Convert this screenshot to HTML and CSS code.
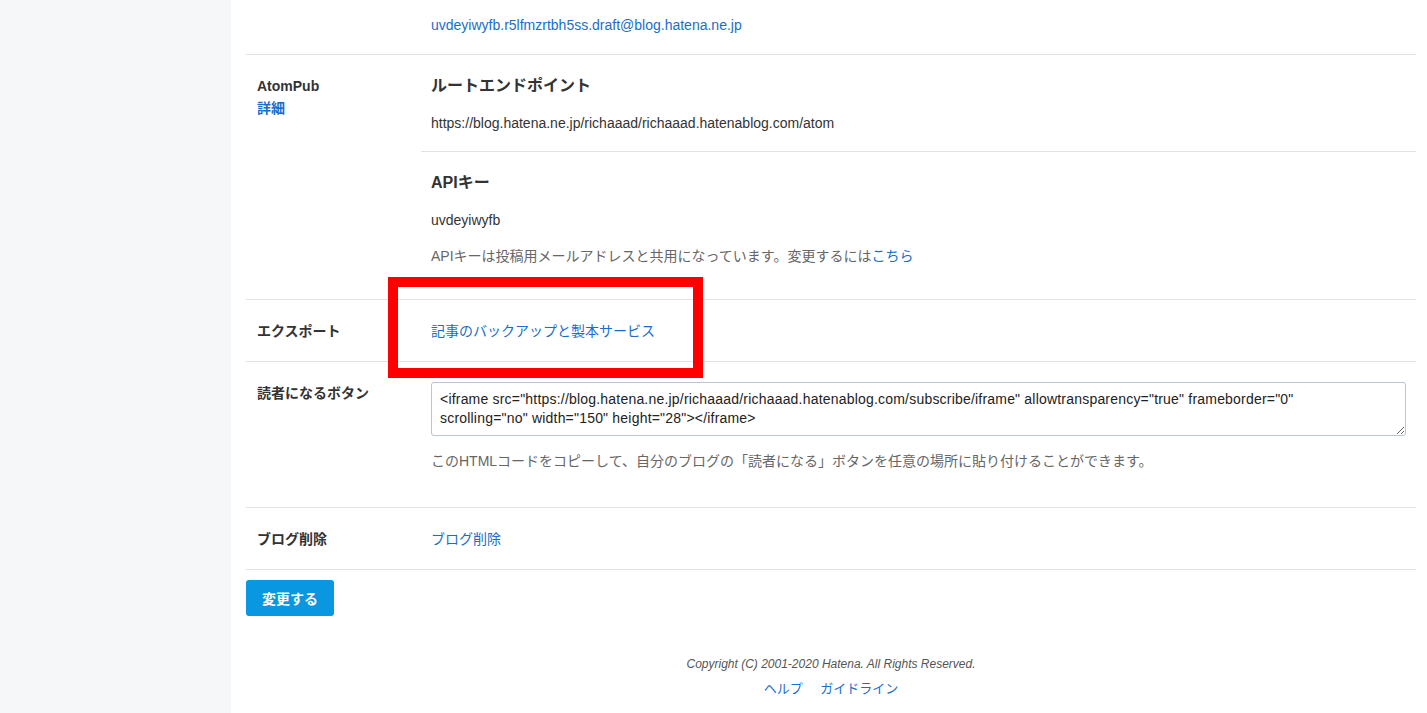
FILE: index.html
```html
<html>
    <head>
        <meta charset="utf-8">
        <link rel="stylesheet" href="styles.css">
    </head>
    <body>
        <div class="layout">
            <div class="sidebar"></div>
            <div class="main">
                <div class="settings">
                    <div class="row row-partial">
                        <div class="label"></div>
                        <div class="value">
                            <a href="#">uvdeyiwyfb.r5lfmzrtbh5ss.draft@blog.hatena.ne.jp</a>
                        </div>
                    </div>
                    <div class="row">
                        <div class="label">
                            AtomPub<br>
                            <a href="#">詳細</a>
                        </div>
                        <div class="value value-sections">
                            <div class="section">
                                <h3>ルートエンドポイント</h3>
                                <p>https://blog.hatena.ne.jp/richaaad/richaaad.hatenablog.com/atom</p>
                            </div>
                            <div class="section">
                                <h3>APIキー</h3>
                                <p>uvdeyiwyfb</p>
                                <p class="note">APIキーは投稿用メールアドレスと共用になっています。変更するには<a href="#">こちら</a></p>
                            </div>
                        </div>
                    </div>
                    <div class="row row-highlight">
                        <div class="label">エクスポート</div>
                        <div class="value">
                            <a href="#">記事のバックアップと製本サービス</a>
                        </div>
                        <div class="highlight-box"></div>
                    </div>
                    <div class="row">
                        <div class="label">読者になるボタン</div>
                        <div class="value">
                            <textarea class="code-box" readonly>&lt;iframe src="https://blog.hatena.ne.jp/richaaad/richaaad.hatenablog.com/subscribe/iframe" allowtransparency="true" frameborder="0" scrolling="no" width="150" height="28"&gt;&lt;/iframe&gt;</textarea>
                            <p class="note">このHTMLコードをコピーして、自分のブログの「読者になる」ボタンを任意の場所に貼り付けることができます。</p>
                        </div>
                    </div>
                    <div class="row">
                        <div class="label">ブログ削除</div>
                        <div class="value">
                            <a href="#">ブログ削除</a>
                        </div>
                    </div>
                </div>
                <button class="submit">変更する</button>
                <div class="footer">
                    <div class="copyright">Copyright (C) 2001-2020 Hatena. All Rights Reserved.</div>
                    <div class="footer-links">
                        <a href="#">ヘルプ</a>
                        <a href="#">ガイドライン</a>
                    </div>
                </div>
            </div>
        </div>
    </body>
</html>
```

FILE: styles.css
```css
body {
    margin: 0;
    font-family: "Liberation Sans", "Noto Sans CJK JP", sans-serif;
    font-size: 14px;
    line-height: 22px;
    color: #333;
    background: #fff;
}
a {
    color: #1a6dcc;
    text-decoration: none;
}
.layout {
    display: flex;
    min-height: 713px;
}
.sidebar {
    width: 231px;
    flex-shrink: 0;
    background: #f6f7f9;
}
.main {
    flex: 1;
    padding: 0 11px 0 15px;
}
.row {
    display: grid;
    grid-template-columns: 175px 1fr;
    border-bottom: 1px solid #dde3e6;
    position: relative;
}
.label {
    padding: 20px 11px 19px;
    font-weight: bold;
}
.label a {
    font-weight: bold;
}
.value {
    padding: 20px 10px 19px;
}
.row-partial .value {
    padding: 14px 10px 18px;
}
.value-sections {
    padding: 0;
}
.section {
    padding: 20px 10px 17px;
}
.section + .section {
    border-top: 1px solid #dde3e6;
    padding-bottom: 32px;
}
.section h3 {
    margin: 0 0 15px;
    font-size: 16px;
    line-height: 22px;
}
.section p {
    margin: 0 0 14px;
}
.section p:last-child {
    margin-bottom: 0;
}
.note {
    color: #666;
}
.value .note {
    margin: 14px 0 16px;
}
.section .note {
    margin: 0;
}
.code-box {
    display: block;
    width: 100%;
    height: 54px;
    box-sizing: border-box;
    padding: 7px 40px 7px 8px;
    border: 1px solid #b9c6cc;
    border-radius: 3px;
    font-family: "Liberation Sans", "Noto Sans CJK JP", sans-serif;
    font-size: 14px;
    letter-spacing: 0.2px;
    line-height: 19px;
    color: #222;
    resize: vertical;
    overflow: hidden;
    margin: 0;
}
.highlight-box {
    position: absolute;
    left: 142px;
    top: -23px;
    width: 315px;
    height: 101px;
    box-sizing: border-box;
    border: 10px solid #ff0000;
    pointer-events: none;
}
.submit {
    margin-top: 10px;
    width: 88px;
    height: 36px;
    border: none;
    border-radius: 3px;
    background: #0897e0;
    color: #fff;
    font-family: "Liberation Sans", "Noto Sans CJK JP", sans-serif;
    font-size: 14px;
    font-weight: bold;
    cursor: pointer;
}
.footer {
    text-align: center;
    padding-top: 38px;
}
.copyright {
    font-size: 12px;
    font-style: italic;
    color: #555;
    line-height: 20px;
}
.footer-links {
    margin-top: 5px;
    font-size: 13px;
    line-height: 20px;
}
.footer-links a {
    margin: 0 7px;
}
```
